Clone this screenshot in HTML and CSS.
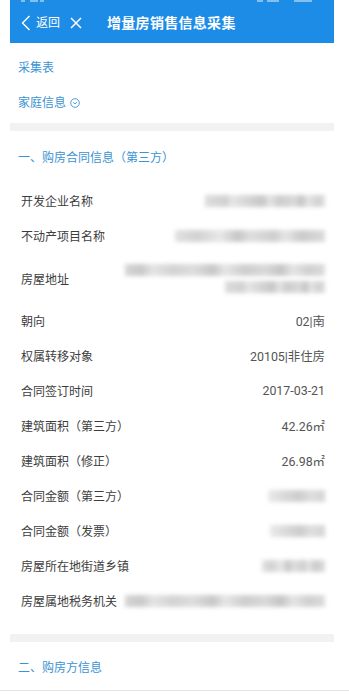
FILE: index.html
```html
<!DOCTYPE html>
<html lang="zh">
<head>
<meta charset="utf-8">
<link rel="stylesheet" href="styles.css">
</head>
<body>
<div class="screen">
  <header class="topbar">
    <div class="status">
      <span class="sb sb1"></span><span class="sb sb2"></span><span class="sb sb3"></span>
      <span class="sb sb4"></span><span class="sb sb5"></span><span class="sb sb6"></span>
    </div>
    <div class="nav-left">
      <svg class="chev" width="10" height="16" viewBox="0 0 10 16"><path d="M8.5 1 L1.5 8 L8.5 15" fill="none" stroke="#fff" stroke-width="1.4"/></svg>
      <span class="back">返回</span>
      <svg class="close" width="12" height="12" viewBox="0 0 12 12"><path d="M1 1 L11 11 M11 1 L1 11" fill="none" stroke="#fff" stroke-width="1.5"/></svg>
    </div>
    <h1 class="title">增量房销售信息采集</h1>
  </header>

  <div class="links">
    <div class="link">采集表</div>
    <div class="link family">家庭信息
      <svg class="circ" width="10" height="10" viewBox="0 0 10 10"><circle cx="5" cy="5" r="4.3" fill="none" stroke="#3c93d3" stroke-width="0.9"/><path d="M3.2 4.2 L5 6 L6.8 4.2" fill="none" stroke="#3c93d3" stroke-width="0.9"/></svg>
    </div>
  </div>

  <div class="band"></div>

  <div class="sec-title">一、购房合同信息（第三方）</div>

  <div class="rows">
    <div class="row"><span class="lab">开发企业名称</span><span class="blur" style="width:120px"></span></div>
    <div class="row"><span class="lab">不动产项目名称</span><span class="blur b2" style="width:150px"></span></div>
    <div class="row addr"><span class="lab">房屋地址</span>
      <span class="addr-val"><span class="blur b3" style="width:200px"></span><span class="blur" style="width:100px"></span></span>
    </div>
    <div class="row"><span class="lab">朝向</span><span class="val">02|南</span></div>
    <div class="row"><span class="lab">权属转移对象</span><span class="val">20105|非住房</span></div>
    <div class="row"><span class="lab">合同签订时间</span><span class="val">2017-03-21</span></div>
    <div class="row"><span class="lab">建筑面积（第三方）</span><span class="val">42.26㎡</span></div>
    <div class="row"><span class="lab">建筑面积（修正）</span><span class="val">26.98㎡</span></div>
    <div class="row"><span class="lab">合同金额（第三方）</span><span class="blur b4" style="width:57px"></span></div>
    <div class="row"><span class="lab">合同金额（发票）</span><span class="blur b4" style="width:55px"></span></div>
    <div class="row"><span class="lab">房屋所在地街道乡镇</span><span class="blur b2" style="width:63px"></span></div>
    <div class="row"><span class="lab">房屋属地税务机关</span><span class="blur b3" style="width:200px"></span></div>
  </div>

  <div class="band band2"></div>

  <div class="sec-title sec2">二、购房方信息</div>
</div>
<div class="bottom-line"></div>
</body>
</html>
```

FILE: styles.css
```css
* { box-sizing: border-box; margin: 0; padding: 0; }
html, body { background: #fff; }
body {
  width: 349px;
  height: 695px;
  overflow: hidden;
  font-family: Roboto, "Noto Sans CJK SC", sans-serif;
  font-size: 12px;
  color: #3a3a3a;
}
.screen {
  width: 324px;
  margin-left: 10px;
}
.topbar {
  position: relative;
  height: 43px;
  background: #1d8ce6;
  display: flex;
  align-items: center;
  color: #fff;
}
.status { position: absolute; top: 0; left: 0; right: 0; height: 3px; }
.sb { position: absolute; top: 0; height: 2px; background: rgba(255,255,255,0.45); }
.sb1 { left: 11px; width: 4px; }
.sb2 { left: 20px; width: 8px; }
.sb3 { left: 30px; width: 4px; }
.sb4 { left: 247px; width: 6px; }
.sb5 { left: 257px; width: 12px; }
.sb6 { left: 284px; width: 18px; }
.nav-left {
  display: flex;
  align-items: center;
  padding-left: 11px;
  margin-top: 2px;
}
.chev { display: block; }
.back { margin-left: 5px; font-size: 12px; line-height: 14px; }
.close { margin-left: 10px; display: block; }
.title {
  margin-left: 25px;
  margin-top: 2px;
  font-size: 14px;
  font-weight: 700;
  line-height: 18px;
  letter-spacing: 0.3px;
}
.links { padding: 17px 0 12px 8px; display: flex; flex-direction: column; gap: 19px; }
.link { color: #3c93d3; font-size: 12px; line-height: 16px; display: flex; align-items: center; }
.circ { margin-left: 4px; display: block; }
.band { height: 8px; background: #f2f2f2; }
.band2 { margin-top: 16px; }
.sec-title {
  height: 50px;
  display: flex;
  align-items: center;
  padding-left: 8px;
  color: #3c93d3;
  font-size: 12px;
}
.rows { padding-top: 2px; padding-right: 9px; }
.row {
  height: 35px;
  display: flex;
  align-items: center;
  justify-content: space-between;
  padding-left: 11px;
}
.row.addr { height: 50px; }
.lab { color: #3d3d3d; font-size: 12px; white-space: nowrap; }
.val { color: #555; font-size: 12.4px; }
.addr-val { display: flex; flex-direction: column; align-items: flex-end; gap: 5px; }
.blur {
  display: block;
  height: 12px;
  filter: blur(2px);
  opacity: 0.85;
  background:
    linear-gradient(90deg,
      #d6d6d6 0%, #c9c9c9 18%, #e2e2e2 22%, #cfcfcf 35%, #bdbdbd 48%, #e0e0e0 54%,
      #c4c4c4 62%, #d4d4d4 75%, #b9b9b9 80%, #e0e0e0 86%, #cacaca 94%, #d8d8d8 100%);
}
.b2 {
  background: linear-gradient(90deg,
      #dcdcdc 0%, #cacaca 15%, #e4e4e4 30%, #bcbcbc 42%, #d9d9d9 50%, #c6c6c6 66%,
      #e1e1e1 74%, #c2c2c2 84%, #d5d5d5 100%);
}
.b3 {
  background: linear-gradient(90deg,
      #cfcfcf 0%, #bfbfbf 8%, #e0e0e0 14%, #cbcbcb 24%, #d8d8d8 34%, #bdbdbd 44%,
      #e2e2e2 50%, #c5c5c5 60%, #d3d3d3 70%, #bbbbbb 78%, #e0e0e0 84%, #c8c8c8 92%, #d6d6d6 100%);
}
.b4 {
  background: linear-gradient(90deg,
      #e6e6e6 0%, #d2d2d2 30%, #c4c4c4 55%, #d9d9d9 75%, #cdcdcd 100%);
}
.sec2 { height: 48px; }
.bottom-line {
  position: absolute;
  top: 690px;
  left: 0;
  width: 349px;
  height: 1px;
  background: #e3e3e3;
}
```
